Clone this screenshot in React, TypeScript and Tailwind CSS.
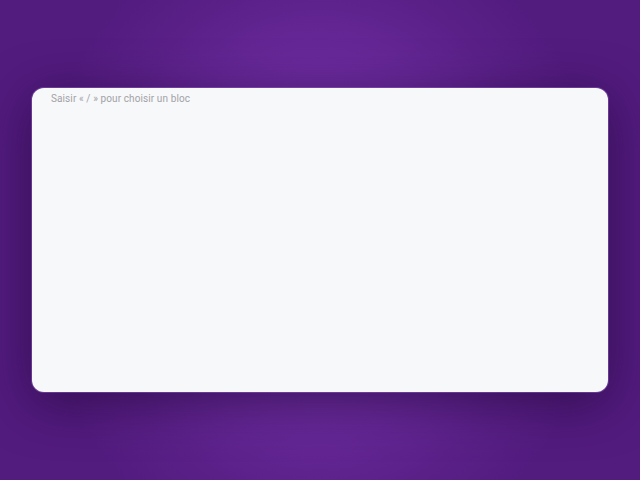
export default function App() {
  return (
    <div className="flex h-[480px] w-[640px] items-center justify-center bg-[radial-gradient(ellipse_45%_70%_at_50%_50%,#7836ae_0%,#6a2a9c_50%,#5a2088_78%,#521b7e_100%)] font-['Roboto',sans-serif]">
      <div className="h-[304px] w-[576px] rounded-[12px] bg-[#f7f8fa] px-[19px] pt-[4px] shadow-[0_10px_50px_rgba(30,5,50,0.6)] ring-1 ring-[#9a6fd0]/40">
        <p className="text-[10px] leading-[13px] tracking-[0.1px] text-[#a2a2a6]">Saisir « / » pour choisir un bloc</p>
      </div>
    </div>
  );
}
